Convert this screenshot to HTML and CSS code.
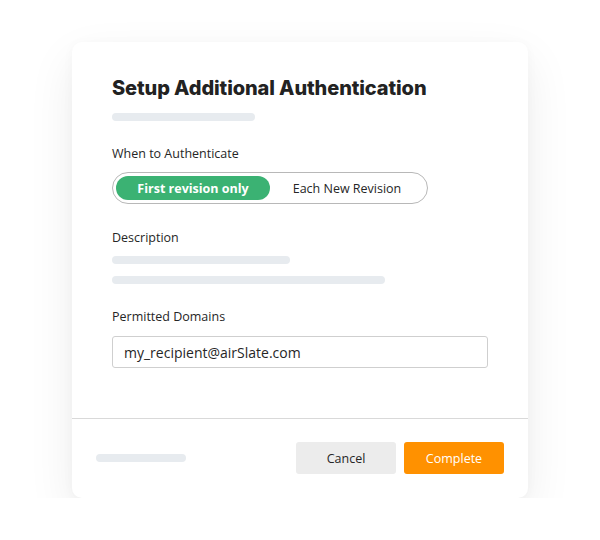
FILE: index.html
```html
<!DOCTYPE html>
<html lang="en">
<head>
<meta charset="utf-8">
<title>Setup Additional Authentication</title>
<link rel="stylesheet" href="styles.css">
</head>
<body>
<div class="card">
  <div class="card-body">
    <h1 class="title">Setup Additional Authentication</h1>
    <div class="skel skel-title"></div>

    <div class="label label-when">When to Authenticate</div>
    <div class="toggle">
      <span class="opt opt-active">First revision only</span>
      <span class="opt">Each New Revision</span>
    </div>

    <div class="label label-desc">Description</div>
    <div class="skel skel-d1"></div>
    <div class="skel skel-d2"></div>

    <div class="label label-dom">Permitted Domains</div>
    <div class="input">my_recipient@airSlate.com</div>
  </div>
  <div class="card-footer">
    <div class="skel skel-foot"></div>
    <div class="actions">
      <button class="btn btn-cancel">Cancel</button>
      <button class="btn btn-complete">Complete</button>
    </div>
  </div>
</div>
</body>
</html>
```

FILE: styles.css
```css
* { box-sizing: border-box; }
html, body { margin: 0; padding: 0; background: #ffffff; }
body {
  font-family: "Open Sans", "Liberation Sans", sans-serif;
  color: #222;
  padding: 42px 0 0 72px;
}
.card {
  width: 456px;
  background: #fff;
  border-radius: 10px;
  box-shadow: 0 18px 48px rgba(0, 0, 0, 0.075), 0 2px 12px rgba(0, 0, 0, 0.03);
}
.card-body {
  padding: 34px 40px 50px 40px;
  border-bottom: 1px solid #d9d9d9;
}
.title {
  margin: 0;
  font-family: Inter, "Liberation Sans", sans-serif;
  font-weight: 800;
  font-size: 20px;
  line-height: 24px;
  color: #222;
  letter-spacing: -0.1px;
}
.skel {
  height: 8px;
  border-radius: 4px;
  background: #e7ebef;
}
.skel-title { width: 143px; margin-top: 13px; }
.label {
  font-size: 12.5px;
  font-weight: 500;
  line-height: 18px;
  color: #262626;
}
.label-when { margin-top: 24px; }
.toggle {
  margin-top: 9px;
  width: 316px;
  height: 32px;
  border: 1px solid #b8b8b8;
  border-radius: 16px;
  padding: 3px;
  display: flex;
  align-items: center;
}
.opt {
  height: 24px;
  border-radius: 12px;
  display: flex;
  align-items: center;
  justify-content: center;
  font-size: 12.5px;
  font-weight: 500;
  color: #262626;
}
.opt-active {
  width: 154px;
  background: #3bb273;
  color: #fff;
  font-weight: 700;
}
.opt:not(.opt-active) { flex: 1; }
.label-desc { margin-top: 25px; }
.skel-d1 { width: 178px; margin-top: 9px; }
.skel-d2 { width: 273px; margin-top: 12px; }
.label-dom { margin-top: 24px; }
.input {
  margin-top: 10px;
  width: 376px;
  height: 32px;
  border: 1px solid #cfcfcf;
  border-radius: 3px;
  padding: 0 11px;
  display: flex;
  align-items: center;
  font-size: 14px;
  color: #262626;
}
.card-footer {
  padding: 23px 24px 24px 24px;
  display: flex;
  align-items: center;
  justify-content: space-between;
}
.skel-foot { width: 90px; }
.actions { display: flex; gap: 8px; }
.btn {
  width: 100px;
  height: 32px;
  border: none;
  border-radius: 3px;
  font-family: "Open Sans", "Liberation Sans", sans-serif;
  font-size: 12.5px;
  font-weight: 500;
  padding: 0;
}
.btn-cancel { background: #ececec; color: #262626; }
.btn-complete { background: #ff9100; color: #fff; }
```
